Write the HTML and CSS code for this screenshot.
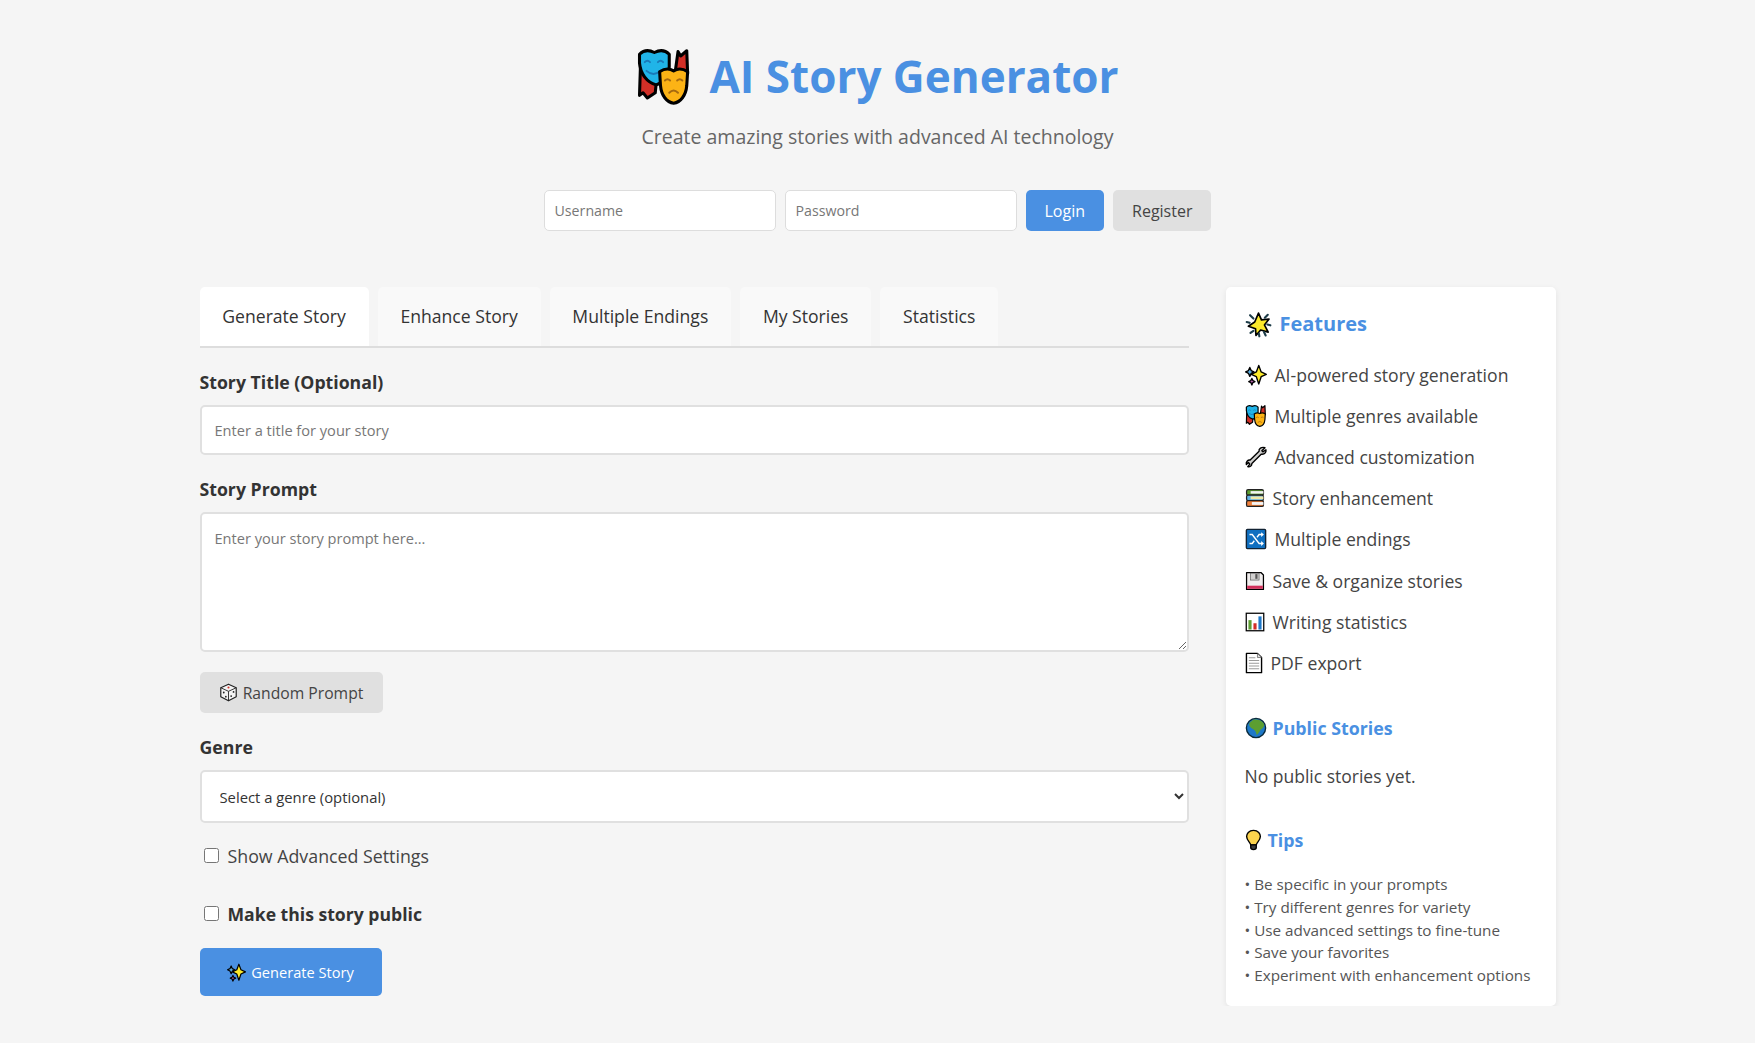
FILE: index.html
```html
<!DOCTYPE html>
<html>
<head>
	<title>AI Story Generator</title>
	<link rel="stylesheet" href="styles.css">
</head>

<body>
	<svg class="icon-defs" xmlns="http://www.w3.org/2000/svg">
		<symbol id="i-masks" viewBox="0 0 60 64">
			<path d="M3 22 L2 53 L6 50 L11 56 L20 50 L22 30Z" fill="#d22f27" stroke="#000" stroke-width="3.5" stroke-linejoin="round"/>
			<path d="M42 32 L46 3 L49 8 L56 2 L57 28Z" fill="#d22f27" stroke="#000" stroke-width="3.5" stroke-linejoin="round"/>
			<path d="M2 6 C7 1 13 1 19 4 C25 1 31 1 36 6 L36 20 C36 30 30 38 21 41 C10 38 3 28 2 16Z" fill="#20b4e8" stroke="#000" stroke-width="3.5" stroke-linejoin="round"/>
			<path d="M8 15q3-3 6 0M23 15q3-3 6 0M10 25q8 7 16 0" fill="none" stroke="#1a7ab8" stroke-width="2.2" stroke-linecap="round"/>
			<path d="M25 26 C31 22 36 22 41 25 C46 22 51 22 57 26 L56 42 C55 53 49 61 41 62 C33 61 27 53 26 42Z" fill="#fcb315" stroke="#000" stroke-width="3.5" stroke-linejoin="round"/>
			<path d="M31 36q3-3 6 0M45 36q3-3 6 0M36 50q5-5 10 0" fill="none" stroke="#a66a10" stroke-width="2.2" stroke-linecap="round"/>
		</symbol>
		<symbol id="i-sparkles" viewBox="0 0 64 64">
			<path d="M40 4 L47 23 L62 30 L47 37 L40 58 L33 37 L18 30 L33 23Z" fill="#fcea2b" stroke="#000" stroke-width="4" stroke-linejoin="round"/>
			<path d="M14 10 L18 19 L26 23 L18 27 L14 36 L10 27 L2 23 L10 19Z" fill="#61b2e4" stroke="#000" stroke-width="4" stroke-linejoin="round"/>
			<path d="M20 42 L23 48 L29 51 L23 54 L20 61 L17 54 L11 51 L17 48Z" fill="#b15fa8" stroke="#000" stroke-width="4" stroke-linejoin="round"/>
		</symbol>
		<symbol id="i-star" viewBox="0 0 64 64">
			<path d="M32 5 L39 21 L57 19 L46 33 L55 50 L37 45 L26 58 L25 42 L8 36 L23 26Z" fill="#fcea2b" stroke="#000" stroke-width="4" stroke-linejoin="round"/>
			<path d="M12 10 L20 18M54 9 L47 16M4 26 L11 28M60 34 L53 32M13 52 L20 47M49 58 L45 50M34 60 L33 54" stroke="#1c3c48" stroke-width="5" stroke-linecap="round"/>
		</symbol>
		<symbol id="i-wrench" viewBox="0 0 64 64">
			<path d="M58 5 L49 14 L52 17 L61 11 C62 18 58 24 50 24 L47 24 L20 51 C20 58 14 62 8 60 L14 53 L10 48 L4 54 C2 47 8 40 15 41 L41 15 C39 8 48 2 58 5Z" fill="#d0cfce" stroke="#000" stroke-width="4" stroke-linejoin="round"/>
		</symbol>
		<symbol id="i-books" viewBox="0 0 64 64">
			<rect x="5" y="5" width="54" height="18" rx="5" fill="#5c9e31" stroke="#222" stroke-width="4"/>
			<rect x="18" y="10" width="41" height="8" fill="#f4f4f4"/>
			<rect x="5" y="23" width="54" height="17" rx="5" fill="#61b2e4" stroke="#222" stroke-width="4"/>
			<rect x="18" y="27" width="41" height="9" fill="#f1e9a8"/>
			<rect x="5" y="40" width="54" height="19" rx="5" fill="#f1803a" stroke="#222" stroke-width="4"/>
			<rect x="22" y="45" width="37" height="9" fill="#f4f4f4"/>
		</symbol>
		<symbol id="i-shuffle" viewBox="0 0 64 64">
			<rect x="4" y="4" width="56" height="56" rx="3" fill="#0f6fc0" stroke="#123" stroke-width="4"/>
			<path d="M13 19 H21 L41 45 H50M13 45 H21 L27 37M35 27 L41 19 H50" fill="none" stroke="#fff" stroke-width="4"/>
			<path d="M47 12 L55 19 L47 26ZM47 38 L55 45 L47 52Z" fill="#fff"/>
		</symbol>
		<symbol id="i-floppy" viewBox="0 0 64 64">
			<path d="M5 5 H51 L59 13 V59 H5Z" fill="#f1eeee" stroke="#000" stroke-width="4" stroke-linejoin="round"/>
			<path d="M7 47 H57 V57 H7Z" fill="#d22f5a"/>
			<rect x="17" y="7" width="28" height="22" fill="#d0cfce" stroke="#555" stroke-width="2"/>
			<rect x="33" y="10" width="7" height="15" fill="#555"/>
		</symbol>
		<symbol id="i-chart" viewBox="0 0 64 64">
			<rect x="4" y="4" width="56" height="56" fill="#fff" stroke="#000" stroke-width="4"/>
			<rect x="11" y="26" width="10" height="30" fill="#5c9e31"/>
			<rect x="27" y="36" width="10" height="20" fill="#d22f27"/>
			<rect x="43" y="14" width="10" height="42" fill="#1e78c8"/>
		</symbol>
		<symbol id="i-doc" viewBox="0 0 52 64">
			<path d="M4 4 H36 L48 16 V60 H4Z" fill="#fff" stroke="#000" stroke-width="4" stroke-linejoin="round"/>
			<path d="M36 4 V16 H48" fill="#e0e0e0" stroke="#555" stroke-width="2"/>
			<path d="M11 17 H30M11 25 H41M11 33 H41M11 41 H41M11 49 H41" stroke="#9b9b9a" stroke-width="3"/>
		</symbol>
		<symbol id="i-globe" viewBox="0 0 64 64">
			<circle cx="32" cy="32" r="28" fill="#1e78c8" stroke="#0a2a3c" stroke-width="4"/>
			<path d="M24 8 C34 6 46 8 54 18 C58 26 54 32 46 36 C42 42 38 50 34 52 C32 44 30 38 22 34 C14 30 10 24 14 16Z" fill="#5c9e31"/>
		</symbol>
		<symbol id="i-bulb" viewBox="0 0 48 64">
			<path d="M24 4 C10 4 4 14 4 22 C4 32 14 38 16 46 H32 C34 38 44 32 44 22 C44 14 38 4 24 4Z" fill="#fcd34d" stroke="#000" stroke-width="4" stroke-linejoin="round"/>
			<path d="M16 46 H32 V54 C32 62 16 62 16 54Z" fill="#3f3f3f" stroke="#000" stroke-width="4" stroke-linejoin="round"/>
		</symbol>
		<symbol id="i-die" viewBox="0 0 64 64">
			<path d="M32 4 L58 16 V46 L32 60 L6 46 V16Z" fill="#f4f4f4" stroke="#222" stroke-width="4" stroke-linejoin="round"/>
			<path d="M6 16 L32 28 L58 16M32 28 V60" fill="none" stroke="#222" stroke-width="3"/>
			<circle cx="32" cy="15" r="3.5" fill="#d22f27"/>
			<circle cx="16" cy="32" r="3" fill="#222"/><circle cx="23" cy="46" r="3" fill="#222"/>
			<circle cx="49" cy="30" r="3" fill="#222"/><circle cx="41" cy="44" r="3" fill="#222"/>
		</symbol>
	</svg>

	<div class="container">
		<header class="page-header">
			<h1><svg class="title-icon"><use href="#i-masks"/></svg>AI Story Generator</h1>
			<p class="subtitle">Create amazing stories with advanced AI technology</p>
		</header>

		<div class="auth-row">
			<input class="auth-input" type="text" placeholder="Username">
			<input class="auth-input" type="password" placeholder="Password">
			<button class="btn btn-primary btn-auth">Login</button>
			<button class="btn btn-grey btn-auth">Register</button>
		</div>

		<div class="layout">
			<main class="main-col">
				<nav class="tabs">
					<div class="tab tab-active">Generate Story</div>
					<div class="tab">Enhance Story</div>
					<div class="tab">Multiple Endings</div>
					<div class="tab">My Stories</div>
					<div class="tab">Statistics</div>
				</nav>

				<form class="story-form">
					<label class="field-label" for="story-title">Story Title (Optional)</label>
					<input class="text-field" id="story-title" type="text" placeholder="Enter a title for your story">

					<label class="field-label label-prompt" for="story-prompt">Story Prompt</label>
					<textarea class="text-field prompt-area" id="story-prompt" placeholder="Enter your story prompt here..."></textarea>

					<button type="button" class="btn btn-grey btn-random"><svg class="btn-icon"><use href="#i-die"/></svg>Random Prompt</button>

					<label class="field-label label-genre" for="genre">Genre</label>
					<select class="genre-select" id="genre">
						<option>Select a genre (optional)</option>
					</select>

					<label class="check-row"><input type="checkbox">Show Advanced Settings</label>
					<label class="check-row check-strong"><input type="checkbox">Make this story public</label>

					<button type="button" class="btn btn-primary btn-generate"><svg class="btn-icon"><use href="#i-sparkles"/></svg>Generate Story</button>
				</form>
			</main>

			<aside class="sidebar">
				<h2 class="side-title"><svg class="side-title-icon"><use href="#i-star"/></svg>Features</h2>
				<ul class="feature-list">
					<li><svg class="feature-icon"><use href="#i-sparkles"/></svg>AI-powered story generation</li>
					<li><svg class="feature-icon"><use href="#i-masks"/></svg>Multiple genres available</li>
					<li><svg class="feature-icon"><use href="#i-wrench"/></svg>Advanced customization</li>
					<li><svg class="feature-icon icon-narrow"><use href="#i-books"/></svg>Story enhancement</li>
					<li><svg class="feature-icon"><use href="#i-shuffle"/></svg>Multiple endings</li>
					<li><svg class="feature-icon icon-narrow"><use href="#i-floppy"/></svg>Save &amp; organize stories</li>
					<li><svg class="feature-icon icon-narrow"><use href="#i-chart"/></svg>Writing statistics</li>
					<li><svg class="feature-icon icon-doc"><use href="#i-doc"/></svg>PDF export</li>
				</ul>

				<h3 class="side-sub side-public"><svg class="sub-icon"><use href="#i-globe"/></svg>Public Stories</h3>
				<p class="no-stories">No public stories yet.</p>

				<h3 class="side-sub side-tips"><svg class="sub-icon bulb-icon"><use href="#i-bulb"/></svg>Tips</h3>
				<div class="tips">
					<div>• Be specific in your prompts</div>
					<div>• Try different genres for variety</div>
					<div>• Use advanced settings to fine-tune</div>
					<div>• Save your favorites</div>
					<div>• Experiment with enhancement options</div>
				</div>
			</aside>
		</div>
	</div>
</body>

</html>
```

FILE: styles.css
```css
* {
	box-sizing: border-box;
}

body {
	margin: 0;
	background-color: #f5f5f5;
	color: #333;
	font-family: "Open Sans", "Noto Sans", sans-serif;
}

.icon-defs {
	display: none;
}

.container {
	width: 1356px;
	margin: 0 auto;
	padding-top: 43px;
}

.page-header {
	text-align: center;
}

h1 {
	margin: 0;
	color: #4a90e2;
	font-size: 44px;
	line-height: 66px;
	font-weight: 700;
	display: flex;
	justify-content: center;
	align-items: center;
}

.title-icon {
	width: 56px;
	height: 56px;
	margin-right: 17px;
	margin-top: 1px;
}

.subtitle {
	margin: 14px 0 0;
	color: #666;
	font-size: 19.5px;
	line-height: 28px;
}

.auth-row {
	display: flex;
	justify-content: center;
	gap: 9px;
	margin-top: 39px;
	height: 41px;
}

.auth-input {
	width: 232px;
	padding: 0 10px;
	border: 1px solid #ddd;
	border-radius: 5px;
	background: #fff;
	font-family: inherit;
	font-size: 14.2px;
}

.btn {
	border: none;
	border-radius: 5px;
	font-family: inherit;
	cursor: pointer;
}

.btn-primary {
	background-color: #4a90e2;
	color: #fff;
}

.btn-grey {
	background-color: #e0e0e0;
	color: #444;
}

.btn-auth {
	padding: 0 19px;
	font-size: 16px;
}

.layout {
	display: flex;
	justify-content: space-between;
	align-items: flex-start;
	margin-top: 56px;
}

.main-col {
	width: 989px;
}

.tabs {
	display: flex;
	gap: 9px;
	height: 61px;
	border-bottom: 2px solid #ddd;
}

.tab {
	padding: 0 22.8px;
	height: 59px;
	line-height: 59px;
	border-radius: 5px 5px 0 0;
	background-color: #f9f9f9;
	font-size: 17.6px;
}

.tab-active {
	background-color: #fff;
}

.field-label {
	display: block;
	font-size: 17.7px;
	line-height: 24px;
	font-weight: 700;
}

.story-form {
	padding-top: 22px;
}

.text-field {
	display: block;
	width: 100%;
	height: 50px;
	margin-top: 11px;
	padding: 0 13px;
	border: 2px solid #e0e0e0;
	border-radius: 5px;
	background: #fff;
	font-family: inherit;
	font-size: 14.6px;
}

input::placeholder,
textarea::placeholder {
	color: #777;
}

.label-prompt {
	margin-top: 22px;
}

.prompt-area {
	height: 140px;
	padding-top: 14px;
	resize: vertical;
}

.btn-random {
	display: flex;
	align-items: center;
	justify-content: center;
	width: 183px;
	height: 41px;
	margin-top: 20px;
	font-size: 15.7px;
}

.btn-icon {
	width: 19px;
	height: 19px;
	margin-right: 5px;
}

.label-genre {
	margin-top: 22px;
}

.genre-select {
	display: block;
	width: 100%;
	height: 53px;
	margin-top: 11px;
	padding: 0 14px;
	border: 2px solid #e0e0e0;
	border-radius: 5px;
	background: #fff;
	color: #333;
	font-family: inherit;
	font-size: 14.8px;
}

.check-row {
	display: flex;
	align-items: center;
	margin-top: 20px;
	height: 26px;
	color: #444;
	font-size: 17.8px;
}

.check-row input {
	width: 15px;
	height: 15px;
	margin: 0 9px 2px 4px;
}

.check-strong {
	margin-top: 32px;
	color: #333;
	font-size: 17.6px;
	font-weight: 700;
}

.btn-generate {
	display: flex;
	align-items: center;
	justify-content: center;
	width: 182px;
	height: 48px;
	margin-top: 21px;
	font-size: 14.6px;
}

.sidebar {
	width: 330px;
	height: 719px;
	padding: 20px 19px;
	border-radius: 5px;
	background: #fff;
	box-shadow: 0 2px 6px rgba(0, 0, 0, 0.08);
}

.side-title {
	display: flex;
	align-items: center;
	margin: 0;
	color: #4a90e2;
	font-size: 20px;
	line-height: 34px;
}

.side-title-icon {
	width: 27px;
	height: 27px;
	margin-right: 8px;
}

.feature-list {
	margin: 13px 0 0;
	padding: 0;
	list-style: none;
}

.feature-list li {
	display: flex;
	align-items: center;
	height: 41.2px;
	color: #444;
	font-size: 17.6px;
}

.feature-icon {
	width: 22px;
	height: 22px;
	margin-right: 8px;
	flex: none;
}

.icon-narrow {
	width: 20px;
}

.icon-doc {
	width: 18px;
}

.side-sub {
	display: flex;
	align-items: center;
	margin: 0;
	color: #4a90e2;
	font-size: 17.8px;
	line-height: 26px;
}

.side-public {
	margin-top: 31.5px;
}

.side-tips {
	margin-top: 39px;
}

.sub-icon {
	width: 22px;
	height: 22px;
	margin-right: 6px;
}

.bulb-icon {
	width: 17px;
}

.no-stories {
	margin: 23px 0 0;
	color: #444;
	font-size: 17.5px;
	line-height: 24px;
}

.tips {
	margin-top: 20px;
	color: #555;
	font-size: 15.25px;
	line-height: 22.8px;
}
```
